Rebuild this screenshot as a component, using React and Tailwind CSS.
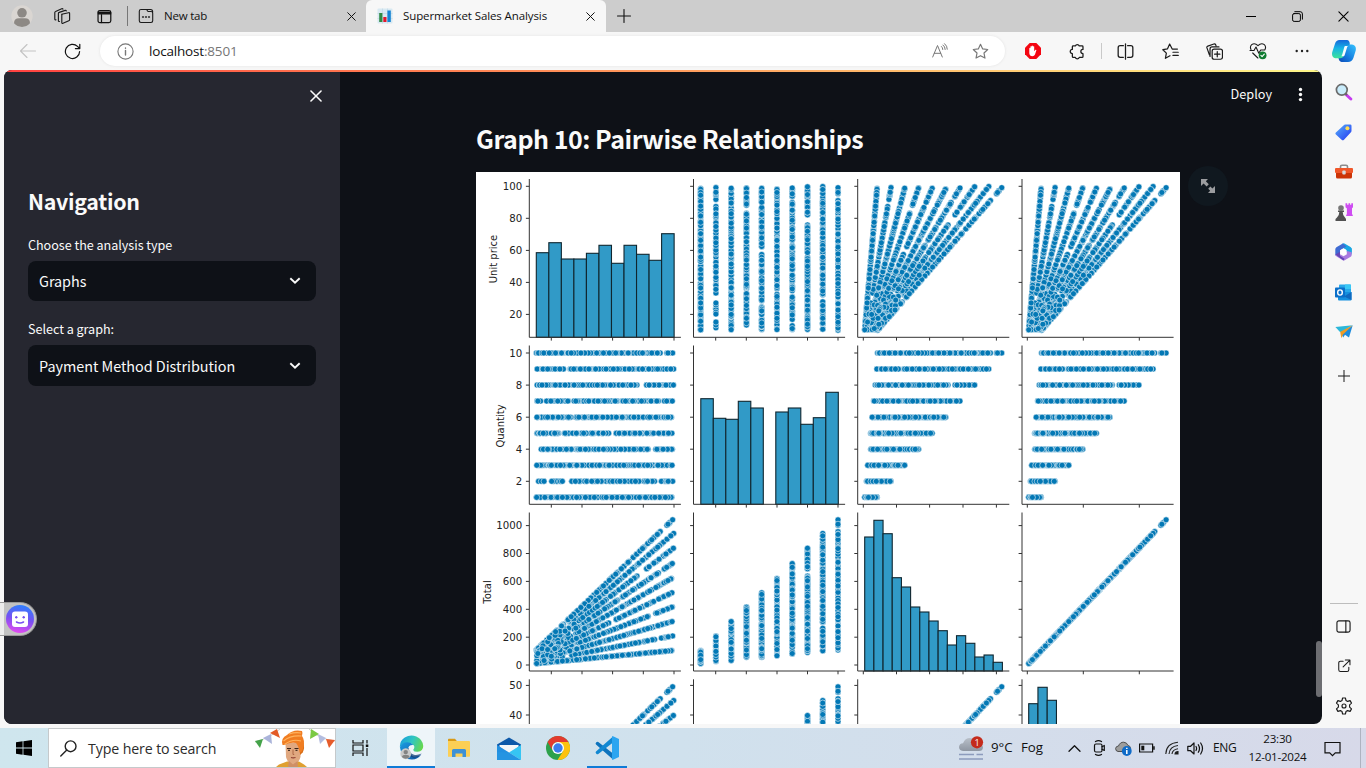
import React from "react";

const BLUE = "#0378b5";
const UI = "font-['Open_Sans','Liberation_Sans',sans-serif]";

/* ---------- chart data ---------- */
const GAPS = {
  2: [[88.5, 91.5], [28, 32.5], [16, 19.5], [9, 11.3]],
  4: [[85, 88], [9, 13.3]],
  5: [[57.5, 61.5]],
  7: [[31, 34.5], [13.5, 16.5]],
  8: [[76.5, 80.5]],
  9: [[28, 31.5]],
  10: [[91.5, 94.8]],
};

function makeSales() {
  let seed = 20240112;
  const rnd = () => {
    seed = (seed * 1664525 + 1013904223) % 4294967296;
    return seed / 4294967296;
  };
  const rows = [];
  for (let q = 1; q <= 10; q++) {
    const n = q === 4 || q === 2 ? 92 : 108;
    for (let i = 0; i < n; i++) {
      const p = 10 + ((i + (rnd() + rnd() - 1) * 3.2) / n) * 90;
      const price = Math.max(10.1 + rnd(), Math.min(99.95 - rnd() * 2, p));
      if ((GAPS[q] || []).some(([a, b]) => price > a && price < b)) continue;
      rows.push({ price, q, k: rnd() });
    }
  }
  return rows.sort((a, b) => a.k - b.k);
}
const SALES = makeSales();

const X = [
  { left: 53.3, map: (d) => 44.7 + 1.5325 * d.price, ticks: [75.3, 106, 136.6, 167.3, 198] },
  { left: 217.5, map: (d) => 209.4 + 15.26 * d.q, ticks: [239.7, 270.3, 301, 331.5, 362] },
  { left: 381.7, map: (d) => 387.3 + 0.133 * 1.05 * d.q * d.price, ticks: [387.3, 420.5, 453.6, 487, 520.4] },
  { left: 546, map: (d) => 551.3 + 2.8 * 0.05 * d.q * d.price, ticks: [551.3, 607.3, 663.3] },
];
const Y = [
  { top: 7, bottom: 165.3, map: (d) => 174.5 - 1.6025 * d.price, ticks: [["100", 14.3], ["80", 46.3], ["60", 78.4], ["40", 110.4], ["20", 142.4]] },
  { top: 173.5, bottom: 332.3, map: (d) => 341.4 - 16.04 * d.q, ticks: [["10", 181], ["8", 213.1], ["6", 245.2], ["4", 277.2], ["2", 309.3]] },
  { top: 340.5, bottom: 499, map: (d) => 493 - 0.1395 * 1.05 * d.q * d.price, ticks: [["1000", 353.6], ["800", 381.5], ["600", 409.4], ["400", 437.3], ["200", 465.2], ["0", 493]] },
  { top: 507.3, bottom: 666, map: (d) => 661.5 - 2.96 * 0.05 * d.q * d.price, ticks: [["50", 513.4], ["40", 543]] },
];
const HIST = [
  { x: 60.3, w: 12.53, tops: [80.7, 70.7, 87, 87, 81.3, 73.3, 91.3, 73.3, 82.3, 88.3, 61.7] },
  { x: 224.8, w: 12.5, tops: [226.7, 246.3, 247.3, 229.3, 236, null, 240, 236, 252.3, 245.7, 220.3] },
  { x: 388.7, w: 9.18, tops: [365, 348.3, 361.7, 405.7, 415, 435, 440, 449, 458.7, 473, 463.7, 471.3, 485, 483, 490.3] },
  { x: 552.7, w: 9.25, tops: [531.7, 515.3, 528.3] },
];

function Panel({ r, c }) {
  const x = X[c];
  const y = Y[r];
  const h = HIST[r];
  return (
    <g>
      {r === c
        ? h.tops.map((t, i) =>
            t === null ? null : (
              <rect key={i} x={h.x + i * h.w} y={t} width={h.w} height={y.bottom - t} fill="#319ac7" stroke="#10262f" strokeWidth="1.1" />
            )
          )
        : SALES.map((d, i) => (
            <circle key={i} cx={x.map(d)} cy={y.map(d)} r="3" fill={BLUE} stroke="#fff" strokeWidth="0.55" />
          ))}
      <path
        d={`M${x.left} ${y.top}V${y.bottom}H${x.left + 151.6}` + x.ticks.map((t) => `M${t} ${y.bottom}v3.3`).join("") + y.ticks.map(([, t]) => `M${x.left} ${t}h-3.4`).join("")}
        fill="none" stroke="#333" strokeWidth="1"
      />
    </g>
  );
}

function PairPlot() {
  return (
    <svg width="704" height="552" viewBox="0 0 704 552" className="block bg-white">
      {Y.map((_, r) => X.map((__, c) => <Panel key={r * 4 + c} r={r} c={c} />))}
      <g fontFamily="DejaVu Sans, sans-serif" fontSize="10.2" fill="#222">
        {Y.map((y) => y.ticks.map(([t, p]) => (
          <text key={t + p} x="46.3" y={p + 3.8} textAnchor="end">{t}</text>
        )))}
        <g textAnchor="middle" fontSize="10">
          <text transform="translate(21 87) rotate(-90)">Unit price</text>
          <text transform="translate(28 254) rotate(-90)">Quantity</text>
          <text transform="translate(15 420) rotate(-90)">Total</text>
        </g>
      </g>
    </svg>
  );
}

/* ---------- generic icon helpers ---------- */
function I({ s = 16, w = 1.1, c = "#1b1b1b", children, fill = "none", vb = "0 0 16 16" }) {
  return (
    <svg width={s} height={s} viewBox={vb} fill={fill} stroke={c} strokeWidth={w} strokeLinecap="round" strokeLinejoin="round" className="block shrink-0">
      {children}
    </svg>
  );
}
function Cell({ className = "", children }) {
  return <div className={"flex shrink-0 items-center justify-center " + className}>{children}</div>;
}
const Cross = ({ s = 9, w = 1.1, c = "#111" }) => (
  <I s={s} w={w} c={c} vb="0 0 10 10"><path d="M.8.8l8.4 8.4M9.2.8L.8 9.2" /></I>
);
const STAR = "M8 1.2l2.05 4.35 4.75.6-3.5 3.3.9 4.75L8 11.9l-4.2 2.3.9-4.75-3.5-3.3 4.75-.6z";

function TabStrip() {
  return (
    <div className={"flex h-8 items-center bg-[#cdcdcd] text-[11.5px] text-[#111] " + UI}>
      <Cell className="w-11">
        <svg width="22" height="22" viewBox="0 0 22 22">
          <circle cx="11" cy="11" r="10.7" fill="#dad6d2" />
          <circle cx="11" cy="7.8" r="4.8" fill="#8d8985" />
          <path d="M3 18.3q0-5 5-5h6q5 0 5 5a10.7 10.7 0 0 1-16 0z" fill="#8d8985" />
        </svg>
      </Cell>
      <Cell className="w-9">
        <I s={18} vb="0 0 18 18" w={1.15}>
          <path d="M8.6 7.3l7-1.6q1-.2 1 .8v6.2q0 .8-.8 1l-5.8 2.6q-1.2.5-1.2-.8V8.2q0-.7.6-.9z" />
          <path d="M6.5 14.5q-1.1.2-1.1-.8V6.4q0-.8.8-1l6-2q.9-.2 1.1.6" />
          <path d="M3 12.8q-1.2.2-1.2-.9V5.6q0-.8.8-1.1L8.7 1.7q.9-.3 1.3.4" />
        </I>
      </Cell>
      <Cell className="w-12">
        <I s={15} w={1.3} c="#111"><rect x="1.1" y="1.6" width="13.6" height="13" rx="2" /><path d="M1.5 3.2h13v2h-13z" fill="#111" /><path d="M4.8 6v8.5" /></I>
      </Cell>
      <div className="-ml-px h-5 w-px bg-[#777]" />
      <Cell className="w-9">
        <I s={16}><path d="M3 1.5h5.5l1.500 2h3q1.700 0 1.700 1.700v7.600q0 1.700-1.700 1.700H3q-1.700 0-1.700-1.700V3.200Q1.300 1.500 3 1.500zM8.500 1.500h4q2.200 0 2.200 2.500" /><path d="M4.600 9h.8M7.600 9h.8M10.600 9h.8" strokeWidth="1.5" /></I>
      </Cell>
      <span className="w-[178px] pb-px tracking-[-0.2px]">New tab</span>
      <Cell className="w-[19px]"><Cross /></Cell>
      <div className="ml-[5px] flex h-8 w-[240px] items-center rounded-t-md bg-[#f7f7f7] pl-[11px]">
        <svg width="16" height="16" viewBox="0 0 16 16">
          <rect x=".5" y=".5" width="15" height="15" rx="1" fill="#d8e9f2" />
          <path d="M.5 5.500h15M.5 10.500h15M5.500.5v15M10.500.5v15" stroke="#bdd5e2" strokeWidth=".6" />
          <rect x="2.2" y="5" width="3.2" height="9" fill="#2e8b45" /><rect x="6.3" y="9" width="3.2" height="5" fill="#e3172e" /><rect x="10.4" y="2.5" width="3.4" height="11.5" fill="#1583d3" />
        </svg>
        <span className="ml-[10px] w-[177px] pb-px tracking-[-0.1px] whitespace-nowrap">Supermarket Sales Analysis</span>
        <Cell className="w-5"><Cross /></Cell>
      </div>
      <Cell className="w-9"><I s={14} c="#111" vb="0 0 14 14"><path d="M7 .5v13M.5 7h13" /></I></Cell>
      <div className="flex-1" />
      <Cell className="w-[46px]"><I s={10} vb="0 0 10 10" w={1} c="#000"><path d="M0 5.500h10" /></I></Cell>
      <Cell className="w-[46px]"><I s={11} vb="0 0 11 11" w={1} c="#000"><rect x=".6" y="2.6" width="7.8" height="7.8" rx="1.5" /><path d="M2.800.7h5.400q2.200 0 2.200 2.200v5.300" /></I></Cell>
      <Cell className="w-[46px]"><Cross s={11} w={1} c="#000" /></Cell>
    </div>
  );
}

function Toolbar() {
  return (
    <div className={"flex h-[38px] items-center bg-[#f7f7f7] " + UI}>
      <Cell className="ml-1 w-[47px]"><I c="#c3c3c3" s={16}><path d="M15.500 8H.7M7 1.500L.5 8 7 14.500" /></I></Cell>
      <Cell className="w-[42px]"><I s={17} w={1.2} vb="0 0 17 17" c="#111"><path d="M15.600 8.500a7.100 7.100 0 1 1-2.100-5.100l2.200 2.100M15.800 1.300v4.300h-4.400" /></I></Cell>
      <div className="ml-[7px] flex h-[30px] w-[905px] items-center rounded-full bg-white pl-[17px] shadow-[0_0_3px_#e2e2e2]">
        <I s={17} c="#777" vb="0 0 17 17"><circle cx="8.5" cy="8.5" r="7.6" /><path d="M8.500 7.500v4.500M8.500 4.900v.3" strokeWidth="1.4" /></I>
        <span className="ml-[15px] text-[13.5px] tracking-[-0.18px] text-[#111]">localhost<span className="text-[#767676]">:8501</span></span>
        <div className="flex-1" />
        <Cell className="w-10">
          <I s={16} c="#777"><path d="M.7 14L5.500 2.500l4.800 11.500M2.300 10.300h6.400M9.500 3.500q1.300 1 1.300 3M11 2q2.200 1.600 2.200 4.500M12.600.7q2.700 2.200 2.700 5.500" strokeWidth="1" /></I>
        </Cell>
        <Cell className="mr-[5px] w-10"><I s={17} c="#777"><path d={STAR} /></I></Cell>
      </div>
      <Cell className="ml-[6px] w-11">
        <svg width="16" height="16" viewBox="0 0 16 16"><path d="M4.700 0h6.600L16 4.700v6.600L11.300 16H4.700L0 11.300V4.700z" fill="#f40612" /><path d="M4.300 8V5.200q.6-.8 1.100 0V3.600q.6-.8 1.200 0V2.900q.7-.8 1.300 0v.7q.7-.7 1.300 0v4.600l1.300-1.500q1-.3.900.6L10 11.600q-.7 1.600-2.600 1.600-2.800 0-3.100-3z" fill="#fff" /></svg>
      </Cell>
      <Cell className="w-[43px]">
        <I s={17} w={1.2}><path d="M5 2.800h1.900a2 2 0 0 1 3.700 0h2.700q.8 0 .8.800V6a2 2 0 1 0 0 4v2.700q0 .9-.8.900h-2.700a2 2 0 0 1-3.700 0H5q-.9 0-.9-.9V10a2 2 0 1 1 0-4V3.600q0-.8.9-.8z" /></I>
      </Cell>
      <Cell className="mr-px ml-px w-[4px]"><div className="h-4 w-px bg-[#c9c9c9]" /></Cell>
      <Cell className="w-[43px]"><I s={17} w={1.2}><path d="M6 2.500H3q-1.900 0-1.900 1.900v7.200q0 1.900 1.900 1.900h3M10 2.500h3q1.900 0 1.900 1.900v7.200q0 1.900-1.900 1.900h-3M8 .8v14.400" /></I></Cell>
      <Cell className="w-[46px]"><I s={17} w={1.15}><path d="M14.500 5.700H9.600L7.200 1 5.200 5.500.8 6.300l3.300 3.200-.9 4.900 4.300-2.400M10.300 8.700h5M10.300 11.700h5" /></I></Cell>
      <Cell className="w-[43px]"><I s={17} w={1.15}><path d="M3.200 11.200L.9 4.600q-.4-1.300.8-1.700L7.400.9q1.200-.4 1.700.8l.3.8M3.800 12.700V5.600q0-1.900 1.900-1.900h6.500" /><rect x="5.8" y="5.8" width="9.7" height="9.5" rx="1.9" /><path d="M10.600 8v5M8.100 10.500h5" /></I></Cell>
      <Cell className="w-11">
        <I s={18} w={1.1} vb="0 0 18 18"><path d="M2 7.500Q.6 4.500 2.700 2.600 5.700.4 9 3.600q3.300-3.200 6.300-1 2.100 1.900.7 4.900M1 8.500h4l2-3.500 2.800 6.200 1.900-3.200h4M3.700 11l5.200 5" /><circle cx="13.6" cy="13.3" r="3.9" fill="#0f7b30" stroke="none" /><path d="M11.900 13.400l1.200 1.200 2.200-2.400" stroke="#fff" /></I>
      </Cell>
      <Cell className="w-[43px]"><I s={14} c="none" fill="#222" vb="0 0 14 14"><circle cx="1.7" cy="7" r="1.2" /><circle cx="7" cy="7" r="1.2" /><circle cx="12.3" cy="7" r="1.2" /></I></Cell>
      <Cell className="w-[42px]">
        <svg width="24" height="22" viewBox="0 0 24 22">
          <defs>
            <linearGradient id="cpA" x1="0" y1="0" x2="0" y2="1"><stop offset="0" stopColor="#1667d9" /><stop offset=".45" stopColor="#17b3e6" /><stop offset="1" stopColor="#3de39a" /></linearGradient>
            <linearGradient id="cpB" x1="1" y1="0" x2="0" y2="1"><stop offset="0" stopColor="#37c4ff" /><stop offset=".6" stopColor="#1479dd" /><stop offset="1" stopColor="#0c49b5" /></linearGradient>
          </defs>
          <path d="M16 4.500h4q4.800 1 3.700 6l-2.300 7.500q-1.500 4-5.400 4H9.500q-2.500-.5-3-4z" fill="url(#cpB)" />
          <path d="M7.500 0H15q2.600 0 2.900 4.500-2.500.3-3.400 3.200l-2.800 8.300q-1 2.200-3.500 2.200H3.300Q-.8 17 .2 12.200L3 3.700Q4.200 0 7.500 0z" fill="url(#cpA)" />
          <path d="M13 6h2.800q-.6.800-1 2.200L12.700 15q-.3.800-.8 1.200H9.300q.7-.8 1-2L12.300 7q.2-.6.700-1z" fill="#f7fdff" />
        </svg>
      </Cell>
    </div>
  );
}

function Select({ label, value, box }) {
  return (
    <div>
      <div className="h-6 text-[12.6px] leading-[20px] tracking-[-0.03px]">{label}</div>
      <div className={"mt-[2px] flex items-center justify-between rounded-lg bg-[#0e1117] pr-[15px] pl-[11px] text-[14.4px] tracking-[-0.03px] " + box}>
        <span>{value}</span>
        <I s={12} w={2.1} c="#fafafa" vb="0 0 13 13"><path d="M2.200 4.300l4.300 4 4.300-4" strokeLinecap="square" strokeLinejoin="miter" /></I>
      </div>
    </div>
  );
}

function StreamlitApp() {
  return (
    <div className="flex h-[654px] w-[1318px] flex-col overflow-hidden rounded-lg bg-[#0e1117] font-['Noto_Sans_CJK_SC',sans-serif] text-[#fafafa]">
      <div className="h-[2px] shrink-0 bg-linear-to-r from-[#ff4040] via-[#ff9a5c] to-[#fdf78a]" />
      <div className="flex min-h-0 flex-1">
        <aside className="w-[336px] shrink-0 bg-[#262730] px-6">
          <div className="-mr-[6px] flex h-12 items-center justify-end"><Cross s={12} w={1.3} c="#fafafa" /></div>
          <h2 className="mt-[61px] h-10 text-[21.4px] leading-[40px] font-bold tracking-[-0.3px]">Navigation</h2>
          <div className="mt-[14px] flex flex-col gap-[18px]">
            <Select label="Choose the analysis type" value="Graphs" box="h-10" />
            <Select label="Select a graph:" value="Payment Method Distribution" box="h-[41px]" />
          </div>
        </aside>
        <main className="flex min-w-0 flex-1 flex-col">
          <div className="flex h-[44px] items-center justify-end text-[12.7px]">
            <span>Deploy</span>
            <Cell className="mr-2 ml-[14px] w-7"><I s={15} c="none" fill="#fafafa"><circle cx="8" cy="2.6" r="1.8" /><circle cx="8" cy="8" r="1.8" /><circle cx="8" cy="13.4" r="1.8" /></I></Cell>
          </div>
          <h1 className="ml-[136px] h-[56px] text-[25px] leading-[45px] font-bold tracking-[-0.48px] whitespace-nowrap">Graph 10: Pairwise Relationships</h1>
          <div className="ml-[136px] flex min-h-0 flex-1">
            <div className="h-[552px] shrink-0 overflow-hidden"><PairPlot /></div>
            <div className="-mt-[6px] ml-2 flex h-10 w-10 items-center justify-center rounded-full bg-[#10181f]">
              <I s={16} c="none" fill="#9b9c9f"><path d="M1 1h7L5.800 3.200l3 3L6.600 8.400l-3-3L1 8z M15 15H8l2.200-2.200-2-2 2.200-2.200 2 2L15 8z" /></I>
            </div>
            <div className="flex-1" />
            <div className="mt-[469px] h-14 w-[6px] rounded-full bg-[#6d6e72]" />
          </div>
        </main>
      </div>
    </div>
  );
}

function SideRail() {
  const cell = "h-10 w-[43px]";
  return (
    <div className="flex w-[43px] flex-col items-center">
      <Cell className={cell + " mt-[2px]"}>
        <svg width="18" height="18" viewBox="0 0 18 18"><path d="M11 11.500l4.800 4.500" stroke="#c63cf0" strokeWidth="3" strokeLinecap="round" /><path d="M10 10l2 2" stroke="#666" strokeWidth="2" /><circle cx="6.8" cy="6.8" r="5.4" fill="#c9ecfb" stroke="#6b6b6b" strokeWidth="1.7" /></svg>
      </Cell>
      <Cell className={cell}>
        <svg width="17" height="17" viewBox="0 0 17 17"><defs><linearGradient id="tg" x1="0" y1="0" x2="1" y2="1"><stop offset="0" stopColor="#58b2fa" /><stop offset="1" stopColor="#2435f2" /></linearGradient></defs><path d="M8.500 1.400Q9.200.5 10.400.5h4.800q1.300 0 1.300 1.300v5q0 1-.8 1.700L9 15.700q-1.300 1-2.400 0L.9 10.500q-1-1.100 0-2.100z" fill="url(#tg)" /><circle cx="12.4" cy="4.3" r="2" fill="#ffdc52" /></svg>
      </Cell>
      <Cell className={cell}>
        <svg width="18" height="16" viewBox="0 0 18 16"><path d="M5.500 4V2.500Q5.500 1.200 7 1.200h4q1.500 0 1.500 1.300V4" fill="none" stroke="#8b8b8b" strokeWidth="1.6" /><rect y="4" width="18" height="5" rx="1" fill="#f0572a" /><path d="M1 9h16v4q0 1.500-1.500 1.500h-13Q1 14.500 1 13z" fill="#cc3407" /><rect x="7.3" y="6.5" width="3.4" height="4" rx="1" fill="#d7d9dc" /></svg>
      </Cell>
      <Cell className={cell}>
        <svg width="18" height="18" viewBox="0 0 18 18"><path d="M10.500.3h1.700v1.500h1.300V.3h1.600v1.500h1.200V.3H18v4l-1 1v5.500l1 2.200h-7l.9-2.200V5.500l-1.400-1.200z" fill="#cf4df2" /><circle cx="6" cy="5" r="2.8" fill="#777" /><path d="M3 7.500h6v1.600H7.700q0 3.400 2.300 5.400l1 1.500v2H.5v-2L2 14.500q2.300-2 2.300-5.400H3z" fill="#515151" /></svg>
      </Cell>
      <Cell className={cell}>
        <svg width="17" height="18" viewBox="0 0 17 18"><path d="M7.600.6Q8.500 0 9.500.6l6 3.500q1.200.8 1.200 2v5.500L11.500 9V7L7 4.200z" fill="#19a7e3" /><path d="M7.800.5L1.400 4.200Q.3 5 .3 6.300v6L5 14.700V7.300l6.400-3.700z" fill="#3f6bd3" /><path d="M.4 11.600q0 1.300 1.300 2l6 3.700q1 .5 2 0l6-3.500q1-.8 1-2.100V9l-5-1v3.500l-3.200 1.800-3.500-2z" fill="#a97be0" /><path d="M.4 11.500L5 8.700v4l4.500 3-1 1.900z" fill="#6546b7" /><path d="M11.500 8V6.500l5.200 3v-4l-3-2z" fill="#19a7e3" /><path d="M8.500 5.600l3 1.700v3.500l-3 1.700-3-1.700V7.300z" fill="#fff" /></svg>
      </Cell>
      <Cell className={cell}>
        <svg width="17" height="17" viewBox="0 0 17 17"><rect x="4" y=".5" width="12" height="9" rx=".8" fill="#28a8ea" /><path d="M10 .5h5.300q.7 0 .7.800V5h-6z" fill="#39c8f5" /><path d="M3 8h13.500v7.500q0 1-1 1H4q-1 0-1-1z" fill="#1490df" /><path d="M9 12.500L16.500 8v8z" fill="#0f69bf" /><rect y="3.5" width="10" height="10" rx=".9" fill="#0a6fc9" /><ellipse cx="5" cy="8.5" rx="2.3" ry="2.6" fill="none" stroke="#fff" strokeWidth="1.4" /></svg>
      </Cell>
      <Cell className={cell}>
        <svg width="18" height="14" viewBox="0 0 18 14"><path d="M17.700.2L14 12.500 10 9.800l-1.800 2.600L6.500 9z" fill="#1c8bdc" /><path d="M17.700.2L5 6l1.300 7.300L8 9.500z" fill="#ef9b24" /><path d="M.4 2L17.500.2 5 7z" fill="#2cb7d9" /></svg>
      </Cell>
      <Cell className="h-12 w-[43px]"><I s={12} vb="0 0 12 12" w={1}><path d="M6 0v12M0 6h12" /></I></Cell>
      <div className="flex-1" />
      <div className="h-px w-7 bg-[#bdbdbd]" />
      <Cell className="mt-[2px] h-10"><I s={15} w={1.2}><rect x="1" y="2" width="14" height="12" rx="2" /><path d="M10.500 2v12" /></I></Cell>
      <Cell className="h-10"><I s={14} w={1.2}><path d="M7 2.500H4Q2 2.500 2 4.500v7.700q0 2 2 2h7.500q2 0 2-2V9.500M9.500 1.200h5.300v5.300M14.500 1.500L7 9" /></I></Cell>
      <Cell className="h-10"><I s={18} w={1.15} vb="0 0 18 18"><path d="M7.600 1h2.800l.6 2.500 1.600.9 2.500-.8 1.400 2.500-1.900 1.800v2.200l1.900 1.800-1.400 2.500-2.500-.8-1.600.9-.6 2.500H7.600L7 14.500l-1.600-.9-2.500.8-1.400-2.500 1.900-1.800V7.900L1.500 6.100l1.400-2.500 2.500.8L7 3.500z" /><circle cx="9" cy="9" r="2" /></I></Cell>
      <div className="h-[2px]" />
    </div>
  );
}

function SearchArt() {
  return (
    <svg width="80" height="38" viewBox="0 0 80 38" className="block">
      <path d="M0 13Q15 9 25 0M54 0q10 10 26 12" fill="none" stroke="#b9b9b9" strokeWidth=".7" />
      <path d="M0 12l8-2-3 9z" fill="#45a34a" /><path d="M8 9l8-4 1 10z" fill="#aab4da" /><path d="M15 4l7-4 3 9z" fill="#e35b28" />
      <path d="M56 0l8 5-9 5z" fill="#7ac943" /><path d="M63 5l8 4-6 6z" fill="#b4bddf" /><path d="M71 10l9 1-6 8z" fill="#e65c2b" />
      <path d="M21 38l3-2.500 8-3h12l5 3 3 2.500z" fill="#dfa032" />
      <path d="M30.500 14h15v14q-1.500 6-7.500 8-5.500-2-7-8z" fill="#e0a880" /><path d="M34 32l4 3.500 4.500-3.500.5 6H33z" fill="#cf8f66" />
      <path d="M45 14h3.500q1.500 5-.8 9.500L45 26z" fill="#d96f18" />
      <path d="M27.500 16q-2-7 4.500-10Q38 0 47 2q1 2 0 5 3 4 1.500 11-1.500 6-4 5.500-.5-6-3.500-9.500-6-1-11.500 2z" fill="#f07d22" />
      <path d="M28.500 12q7-6 18-5M29.500 15.500q8-6 16.500-3.500M34 5q6-2 12-1" fill="none" stroke="#ffb35e" strokeWidth="1.2" />
      <path d="M32 19.500h4M39.500 19.500h4" stroke="#3a2418" strokeWidth="1" /><path d="M33 21.300h2M40.500 21.300h2" stroke="#21140e" strokeWidth="1" /><path d="M38 20.500v5h1.200" fill="none" stroke="#a8633f" strokeWidth=".9" /><path d="M36 28.500q2 .8 4.500 0" fill="none" stroke="#8e3f30" strokeWidth="1.1" />
    </svg>
  );
}

function Taskbar() {
  return (
    <div className={"flex h-10 items-stretch bg-linear-to-r from-[#cfe6ee] via-[#d0e1ed] to-[#d7d9e9] text-[#111] " + UI}>
      <Cell className="w-12"><svg width="16" height="16" viewBox="0 0 16 16"><path d="M0 2.300L6.600 1.300v6.300H0zM7.400 1.200L16 0v7.600H7.400zM0 8.400h6.600v6.300L0 13.800zM7.400 8.400H16V16l-8.600-1.200z" /></svg></Cell>
      <div className="flex w-[288px] items-center border border-[#c5c9cb] bg-white pl-[11px]">
        <I s={17} w={1.4} c="#222" vb="0 0 17 17"><circle cx="10.6" cy="6.3" r="5.4" /><path d="M6.800 10.100L.8 16" /></I>
        <span className="ml-[11px] w-[168px] pt-px text-[14.2px] tracking-[-0.12px] whitespace-nowrap text-[#2c2c2c]">Type here to search</span>
        <div className="ml-px"><SearchArt /></div>
      </div>
      <Cell className="w-[51px] pr-[3px]"><svg width="17" height="16" viewBox="0 0 17 16" fill="none" stroke="#111" strokeWidth="1.2"><path d="M1 0v3h10V0M1 16v-3h10v3M1 5h10v6H1zM15 0v3.500M15 8v8" /><rect x="13.8" y="4.5" width="2.5" height="2.5" fill="#111" stroke="none" /></svg></Cell>
      <div className="flex w-12 flex-col items-center justify-end border-b-2 border-[#0f7bd7] bg-[#eef5f9]">
        <svg width="25" height="25" viewBox="0 0 26 26" className="mb-[6px]">
          <defs>
            <linearGradient id="eA" x1="0" y1=".3" x2="1" y2=".6"><stop offset="0" stopColor="#1aa0dc" /><stop offset=".5" stopColor="#30c6c0" /><stop offset="1" stopColor="#67d84c" /></linearGradient>
            <linearGradient id="eB" x1="0" y1="0" x2="1" y2="1"><stop offset="0" stopColor="#1b9de2" /><stop offset="1" stopColor="#0d4f9f" /></linearGradient>
          </defs>
          <path d="M1 13Q.3 6 6 2.500q6-3.600 12-1 7 3.300 7.200 10 0 5.500-5.700 6-4 .2-4.800-2 2-2.300.8-4.500Q13 8 8 8.500 3 9.300 1 13z" fill="url(#eA)" />
          <path d="M1 13q2-5.500 7.800-5.500 4.200.2 6.200 3-5-.6-5.600 4 .2 5 5 7.500 4.300 1.500 8.800-1.700-4 5.400-10 5.200Q2.500 25 1 13z" fill="url(#eB)" />
          <path d="M10 13q.2 6 5.600 7.600 3.600.8 8-1.300-4 4.700-8.600 4.400Q8.800 22 9 15z" fill="#123d75" opacity=".75" />
          <circle cx="7" cy="19.500" r="5.6" fill="#c9c9c9" /><circle cx="7" cy="17.8" r="2.3" fill="#838383" /><path d="M3 23q.5-2.500 4-2.500t4 2.500q-4 3.500-8 0z" fill="#838383" />
        </svg>
      </div>
      <Cell className="w-12"><svg width="22" height="20" viewBox="0 0 22 20"><path d="M0 1.500Q0 .8.800.8H7l2 2.400H0z" fill="#d99a16" /><path d="M0 3h21q1 0 1 1v14q0 .8-.8.800H0z" fill="#fccf55" /><path d="M4 19v-6.500Q4 11 5.500 11h11q1.500 0 1.500 1.500V19h-3.500v-3.500h-7V19z" fill="#3d91d6" /></svg></Cell>
      <Cell className="w-[51px]"><svg width="24" height="23" viewBox="0 0 24 23"><path d="M0 7.500L12 .5l12 7v4H0z" fill="#0d59a9" /><path d="M2.500 8h19v2L12 16l-9.500-6z" fill="#f5f7f8" /><path d="M0 8l12 7.500L0 23z" fill="#218fe0" /><path d="M24 8l-12 7.500L24 23z" fill="#36c5f3" /><path d="M0 23V15l12 .5L24 23z" fill="#2494e2" /></svg></Cell>
      <Cell className="w-[48px]"><svg width="24" height="24" viewBox="0 0 24 24"><circle cx="12" cy="12" r="12" fill="#2da14b" /><path d="M12 6h10.400A12 12 0 0 1 11.500 24l5.700-9z" fill="#fdc20f" /><path d="M1.600 6A12 12 0 0 1 22.400 6H12a6 6 0 0 0-5.200 9z" fill="#e33b2e" /><circle cx="12" cy="12" r="6" fill="#fff" /><circle cx="12" cy="12" r="4.7" fill="#3b7ded" /></svg></Cell>
      <Cell className="ml-[5px] w-10 border-b-2 border-[#0f7bd7] pt-[2px]"><svg width="24" height="24" viewBox="0 0 24 24"><path d="M1.300 6.300q1-1 2-.3L18 17.500v6L1 8.500Q0 7.500 1.300 6.300z" fill="#0d73bd" /><path d="M1.300 17.700q1 1 2 .3L18 6.500v-6L1 15.500q-1 1 .3 2.200z" fill="#1288d2" /><path d="M17.500 0L24 3v18l-6.500 3q-.5-.2-.5-1.500V1.500Q17 .3 17.500 0z" fill="#2ba5f0" /></svg></Cell>
      <div className="flex-1" />
      <Cell className="w-[30px]">
        <svg width="26" height="26" viewBox="0 0 26 26"><defs><linearGradient id="fog" x1="0" y1="0" x2="0" y2="1"><stop offset="0" stopColor="#b8bfc8" /><stop offset="1" stopColor="#8e96a2" /></linearGradient></defs><path d="M5 16Q1 15.500 1 12q.3-3.500 4-3.700Q7 3 12 3q5.500.2 7 5.300Q25 9 25 12.500q-.3 3.500-4 3.500z" fill="url(#fog)" /><path d="M1 19.500h15M18.500 19.500H25M1 24h24" stroke="#8c9bbd" strokeWidth="1.6" /><circle cx="19" cy="7.3" r="6.1" fill="#c42b1c" /><text x="19" y="10.7" textAnchor="middle" fontSize="9" fill="#fff" fontFamily="Open Sans, sans-serif">1</text></svg>
      </Cell>
      <span className="ml-[5px] flex w-[30px] items-center text-[13.3px]">9°C</span>
      <span className="flex w-[41px] items-center text-[13.3px]">Fog</span>
      <Cell className="w-6"><I s={13} w={1.3} c="#111" vb="0 0 13 13"><path d="M1 9.300l5.500-5.500L12 9.300" /></I></Cell>
      <Cell className="w-[25px]"><I s={16} c="#111" w={1.2}><rect x="3.5" y="4" width="7.5" height="8" rx="1.5" /><path d="M11 6.800l2.300-1.300v5L11 9.200M4.500 1.600Q7.500-.2 10.500 1.600M4.500 14.400q3 1.800 6 0" /></I></Cell>
      <Cell className="w-6"><svg width="17" height="15" viewBox="0 0 17 15"><path d="M3 10.500Q.5 10 .6 7.500.8 5.200 3.500 5 5 1 8.800 1.200q3.200.3 4.200 3.300 2.500.3 2.600 3 0 3-2.500 3z" fill="#9d9d9d" stroke="#444" strokeWidth=".9" /><circle cx="11.8" cy="10" r="4.9" fill="#0f6bc8" /><path d="M11.800 9v4M11.800 6.700v1.300" stroke="#fff" strokeWidth="1.5" /></svg></Cell>
      <Cell className="w-6"><svg width="16" height="10" viewBox="0 0 16 10"><path d="M.6 1h13v8H.6z" fill="none" stroke="#111" strokeWidth="1.2" /><path d="M2.300 2.700h3v4.600h-3z" fill="#111" /><path d="M14.200 3.300h1.500v3.400h-1.500z" fill="#111" /></svg></Cell>
      <Cell className="w-[25px]"><svg width="14" height="14" viewBox="0 0 14 14" fill="none" stroke="#222" strokeWidth="1.1"><path d="M.8 13Q1.200 2.300 13 1.300M4 13q.6-7.500 9-8.500M7 13q.4-4.500 6-5.300" /><path d="M10 13q.2-2.300 3-2.500V13z" fill="#111" /></svg></Cell>
      <Cell className="w-[22px]"><I s={17} w={1.2} c="#111" vb="0 0 17 17"><path d="M.8 6.300h2.800L7 3v11l-3.400-3.300H.8zM9 6.500q1.200 2 0 4M11.300 4.700q2.400 3.800 0 7.600M13.700 3q3.600 5.500 0 11" /></I></Cell>
      <span className="ml-[7px] flex w-[32px] items-center text-[12px] tracking-[-0.3px]">ENG</span>
      <div className="flex w-[65px] flex-col items-center justify-center text-[11.6px] leading-[18px] tracking-[-0.25px] whitespace-nowrap"><span>23:30</span><span>12-01-2024</span></div>
      <Cell className="w-[44px]"><I s={17} w={1.2} c="#111" vb="0 0 17 17"><path d="M1 2.500h15v10.300h-4.700L8.500 15.600l-2.800-2.800H1z" strokeLinejoin="miter" /></I></Cell>
      <div className="ml-[6px] w-px bg-[#aeb3c0]" />
      <div className="w-[5px]" />
    </div>
  );
}

export default function App() {
  return (
    <div className="relative flex h-[768px] w-[1366px] flex-col overflow-hidden bg-[#f7f7f7]">
      <TabStrip />
      <Toolbar />
      <div className="flex h-[658px] pl-1">
        <StreamlitApp />
        <SideRail />
      </div>
      <Taskbar />
      <div className="absolute top-[602px] left-0 flex h-[34px] w-[37px] items-center rounded-r-full border border-l-0 border-[#999] bg-linear-to-r from-[#ededed] from-[4px] to-[#c2c2c2] to-[4px] pl-[6px]">
        <svg width="28" height="28" viewBox="0 0 28 28">
          <defs><linearGradient id="bot" x1=".6" y1="0" x2=".4" y2="1"><stop offset="0" stopColor="#2e80ff" /><stop offset=".5" stopColor="#7650f2" /><stop offset="1" stopColor="#e34af0" /></linearGradient></defs>
          <circle cx="14" cy="14" r="14" fill="url(#bot)" /><rect x="6" y="6.5" width="16" height="15.5" rx="3" fill="#fff" />
          <path d="M10.300 11v2.500M17.700 11v2.500M9 12.300h2.600M16.400 12.300H19" stroke="#7650f2" strokeWidth="1.2" /><path d="M10.500 17q3.500 2 7 0" fill="none" stroke="#7650f2" strokeWidth="1.6" strokeLinecap="round" />
        </svg>
      </div>
    </div>
  );
}
